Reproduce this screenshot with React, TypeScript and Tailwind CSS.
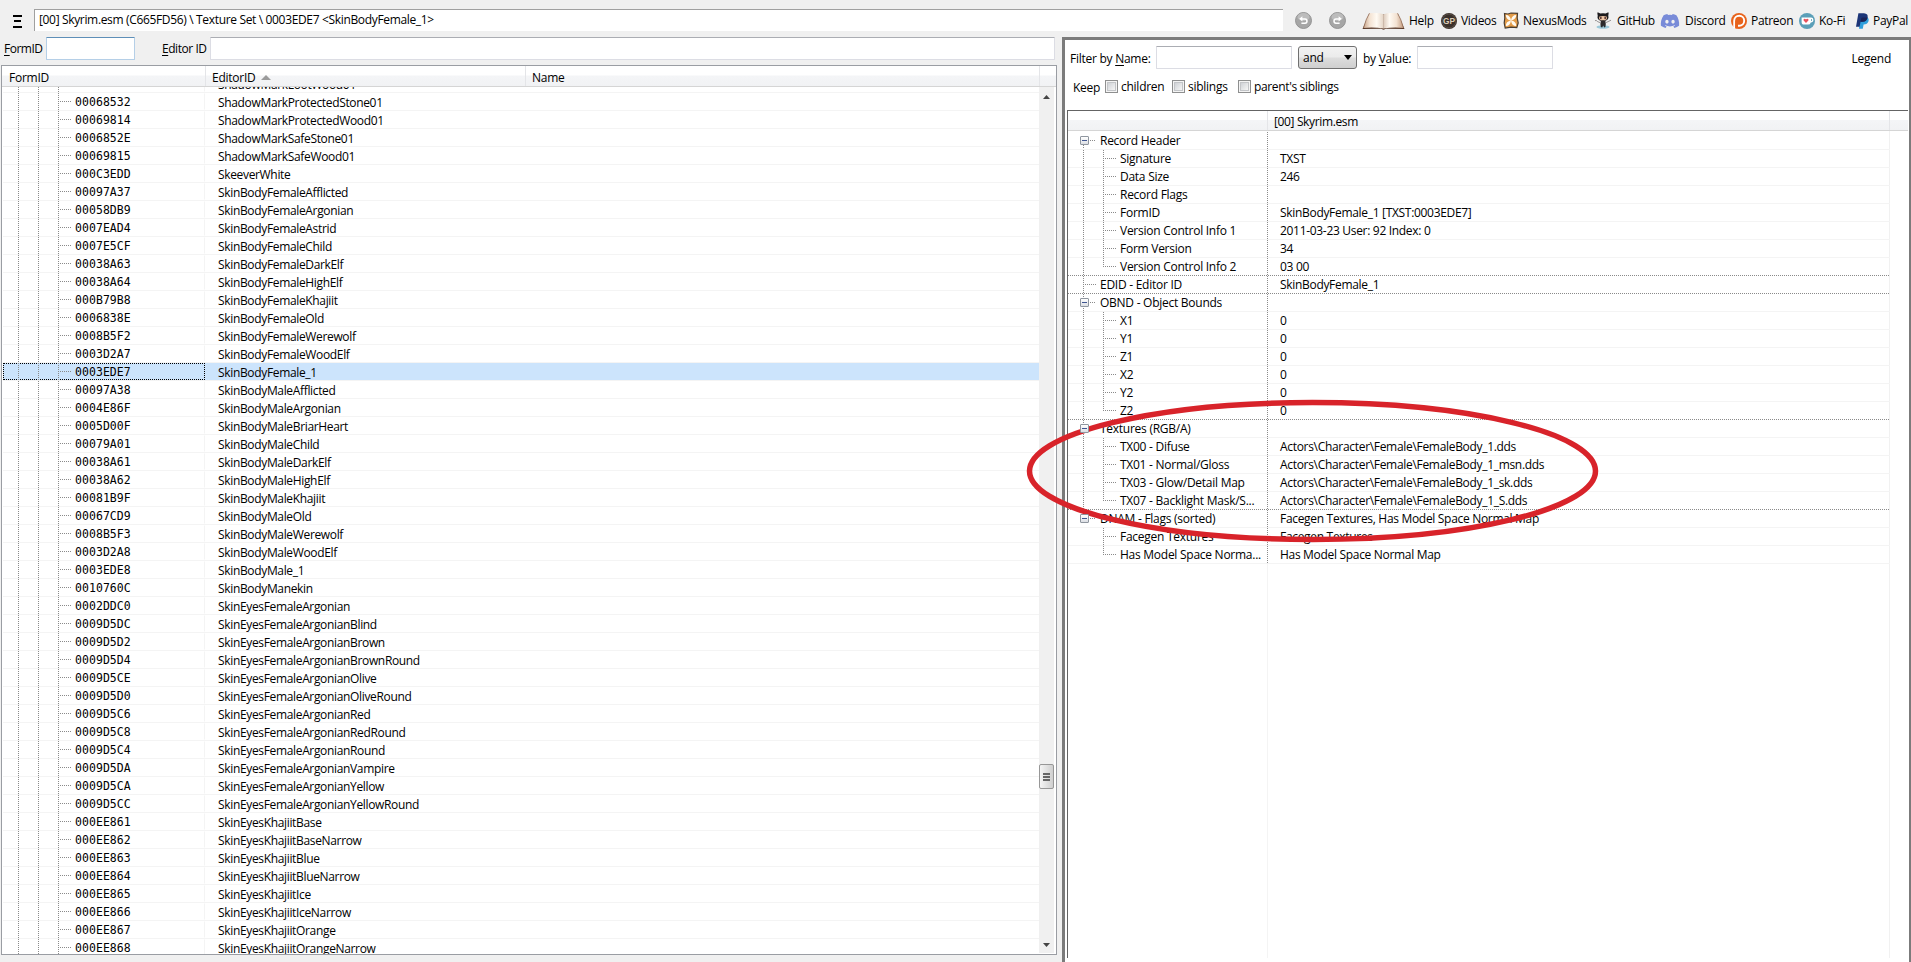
import { useState, type ReactNode } from 'react';
import clsx from 'clsx';
import { FaDiscord } from 'react-icons/fa';

const DOTS_V = 'bg-[repeating-linear-gradient(to_bottom,#8a8a8a_0_1px,transparent_1px_2px)]';
const DOTS_H = 'bg-[repeating-linear-gradient(to_right,#8a8a8a_0_1px,transparent_1px_2px)]';
const HEADER_BG = 'bg-[linear-gradient(to_bottom,#ffffff_0%,#ffffff_45%,#f4f5f7_50%,#f1f2f4_100%)]';
const INPUT_BASE = 'h-[23px] shrink-0 bg-white border rounded-[1px] px-1 outline-none';
const INPUT_GREY = 'border-[#dcdde4] border-t-[#abadb3]';
const INPUT_BLUE = 'border-[#b5cfe7] border-t-[#5e8fb8]';

type TreeEntry = { id: string; name: string };

const ENTRIES: TreeEntry[] = [
  ['', 'ShadowMarkLootWood01'],
  ['00068532', 'ShadowMarkProtectedStone01'],
  ['00069814', 'ShadowMarkProtectedWood01'],
  ['0006852E', 'ShadowMarkSafeStone01'],
  ['00069815', 'ShadowMarkSafeWood01'],
  ['000C3EDD', 'SkeeverWhite'],
  ['00097A37', 'SkinBodyFemaleAfflicted'],
  ['00058DB9', 'SkinBodyFemaleArgonian'],
  ['0007EAD4', 'SkinBodyFemaleAstrid'],
  ['0007E5CF', 'SkinBodyFemaleChild'],
  ['00038A63', 'SkinBodyFemaleDarkElf'],
  ['00038A64', 'SkinBodyFemaleHighElf'],
  ['000B79B8', 'SkinBodyFemaleKhajiit'],
  ['0006838E', 'SkinBodyFemaleOld'],
  ['0008B5F2', 'SkinBodyFemaleWerewolf'],
  ['0003D2A7', 'SkinBodyFemaleWoodElf'],
  ['0003EDE7', 'SkinBodyFemale_1'],
  ['00097A38', 'SkinBodyMaleAfflicted'],
  ['0004E86F', 'SkinBodyMaleArgonian'],
  ['0005D00F', 'SkinBodyMaleBriarHeart'],
  ['00079A01', 'SkinBodyMaleChild'],
  ['00038A61', 'SkinBodyMaleDarkElf'],
  ['00038A62', 'SkinBodyMaleHighElf'],
  ['00081B9F', 'SkinBodyMaleKhajiit'],
  ['00067CD9', 'SkinBodyMaleOld'],
  ['0008B5F3', 'SkinBodyMaleWerewolf'],
  ['0003D2A8', 'SkinBodyMaleWoodElf'],
  ['0003EDE8', 'SkinBodyMale_1'],
  ['0010760C', 'SkinBodyManekin'],
  ['0002DDC0', 'SkinEyesFemaleArgonian'],
  ['0009D5DC', 'SkinEyesFemaleArgonianBlind'],
  ['0009D5D2', 'SkinEyesFemaleArgonianBrown'],
  ['0009D5D4', 'SkinEyesFemaleArgonianBrownRound'],
  ['0009D5CE', 'SkinEyesFemaleArgonianOlive'],
  ['0009D5D0', 'SkinEyesFemaleArgonianOliveRound'],
  ['0009D5C6', 'SkinEyesFemaleArgonianRed'],
  ['0009D5C8', 'SkinEyesFemaleArgonianRedRound'],
  ['0009D5C4', 'SkinEyesFemaleArgonianRound'],
  ['0009D5DA', 'SkinEyesFemaleArgonianVampire'],
  ['0009D5CA', 'SkinEyesFemaleArgonianYellow'],
  ['0009D5CC', 'SkinEyesFemaleArgonianYellowRound'],
  ['000EE861', 'SkinEyesKhajiitBase'],
  ['000EE862', 'SkinEyesKhajiitBaseNarrow'],
  ['000EE863', 'SkinEyesKhajiitBlue'],
  ['000EE864', 'SkinEyesKhajiitBlueNarrow'],
  ['000EE865', 'SkinEyesKhajiitIce'],
  ['000EE866', 'SkinEyesKhajiitIceNarrow'],
  ['000EE867', 'SkinEyesKhajiitOrange'],
  ['000EE868', 'SkinEyesKhajiitOrangeNarrow'],
].map(([id, name]) => ({ id, name }));

type RecordRow = {
  label: string
  value?: string
  child?: boolean
  expandable?: boolean
  // last row of its group: the branch line stops here
  last?: boolean
  // strong separator under the row
  strong?: boolean
}

const RECORD: RecordRow[] = [
  { label: 'Record Header', expandable: true },
  { label: 'Signature', value: 'TXST', child: true },
  { label: 'Data Size', value: '246', child: true },
  { label: 'Record Flags', child: true },
  { label: 'FormID', value: 'SkinBodyFemale_1 [TXST:0003EDE7]', child: true },
  { label: 'Version Control Info 1', value: '2011-03-23 User: 92 Index: 0', child: true },
  { label: 'Form Version', value: '34', child: true },
  { label: 'Version Control Info 2', value: '03 00', child: true, last: true, strong: true },
  { label: 'EDID - Editor ID', value: 'SkinBodyFemale_1', strong: true },
  { label: 'OBND - Object Bounds', expandable: true },
  { label: 'X1', value: '0', child: true },
  { label: 'Y1', value: '0', child: true },
  { label: 'Z1', value: '0', child: true },
  { label: 'X2', value: '0', child: true },
  { label: 'Y2', value: '0', child: true },
  { label: 'Z2', value: '0', child: true, last: true, strong: true },
  { label: 'Textures (RGB/A)', expandable: true },
  { label: 'TX00 - Difuse', value: 'Actors\\Character\\Female\\FemaleBody_1.dds', child: true },
  { label: 'TX01 - Normal/Gloss', value: 'Actors\\Character\\Female\\FemaleBody_1_msn.dds', child: true },
  { label: 'TX03 - Glow/Detail Map', value: 'Actors\\Character\\Female\\FemaleBody_1_sk.dds', child: true },
  { label: 'TX07 - Backlight Mask/S...', value: 'Actors\\Character\\Female\\FemaleBody_1_S.dds', child: true, last: true, strong: true },
  { label: 'DNAM - Flags (sorted)', value: 'Facegen Textures, Has Model Space Normal Map', expandable: true },
  { label: 'Facegen Textures', value: 'Facegen Textures', child: true },
  { label: 'Has Model Space Norma...', value: 'Has Model Space Normal Map', child: true, last: true },
];
const LAST_ROOT = 21;

function BookIcon() {
  return (
    <svg width="43" height="18" viewBox="0 0 43 18">
      <defs>
        <linearGradient id="pageL" x1="0" x2="1"><stop offset="0" stopColor="#c9a58b" /><stop offset=".3" stopColor="#f3e2d2" /><stop offset=".65" stopColor="#fffaf3" /><stop offset="1" stopColor="#e3d3c4" /></linearGradient>
        <linearGradient id="pageR" x1="0" x2="1"><stop offset="0" stopColor="#dccabb" /><stop offset=".3" stopColor="#fffaf3" /><stop offset=".65" stopColor="#f3e2d2" /><stop offset="1" stopColor="#c39a7d" /></linearGradient>
      </defs>
      <path d="M0.5 17 L7 2 L36 2 L42.5 17 L24 16.8 L21.5 17.8 L19 16.8Z" fill="#5a3b2b" />
      <path d="M1.6 15.9 Q3.8 7 7.5 1.2 Q17 .4 21.7 2.2 L21.7 16.6 Q12 14.8 1.6 15.9Z" fill="url(#pageL)" />
      <path d="M41.4 15.9 Q39.2 7 35.5 1.2 Q26 .4 21.5 2.2 L21.5 16.6 Q31 14.8 41.4 15.9Z" fill="url(#pageR)" />
      <path d="M1.6 15.8 Q3.8 7 7.5 1.2M41.4 15.8 Q39.2 7 35.5 1.2" fill="none" stroke="#96705a" strokeWidth=".8" />
    </svg>
  );
}

function GpIcon() {
  return (
    <svg width="16" height="16" viewBox="0 0 16 16">
      <circle cx="8" cy="8" r="8" fill="#3a302a" />
      <circle cx="8" cy="8" r="6.9" fill="none" stroke="#665a50" strokeWidth=".7" />
      <text x="2" y="11.4" fontSize="9.5" fontWeight="700" fontFamily="Liberation Sans, sans-serif" fill="#d9cdb8" textLength="12" lengthAdjust="spacingAndGlyphs" letterSpacing="0">GP</text>
    </svg>
  );
}

function NexusIcon() {
  return (
    <svg width="16" height="17" viewBox="0 0 16 17">
      <path d="M1.5 1.5 L5 2 L8 1 L14.5 1.3 L14.2 6 L15.2 11 L13.8 15.6 L8 15.2 L2.2 16 L1.2 11 L1.8 6Z" fill="#e39c49" stroke="#4a3d30" strokeWidth="1.2" />
      <path d="M2.8 3 Q7.2 3 8 8.5 Q3 7.8 2.8 3ZM13.2 3 Q13.2 7.4 8 8.5 Q8.8 3 13.2 3ZM2.8 14 Q2.8 9.4 8 8.5 Q7.2 14 2.8 14ZM13.2 14 Q8.8 14 8 8.5 Q13.2 9.2 13.2 14Z" fill="#fffaf0" />
    </svg>
  );
}

function OctocatIcon() {
  return (
    <svg width="18" height="17" viewBox="0 0 18 17">
      <ellipse cx="9" cy="15" rx="6.5" ry="1.7" fill="#9cc9da" />
      <path d="M1 8.6 Q2.4 8 3.6 9.6 L6 10.6 M17 8.2 L12 10.6" fill="none" stroke="#6d6868" strokeWidth=".7" />
      <path d="M6.8 9 L11.4 9 Q12.2 12 11.4 15 L10.2 15.6 L9.2 13.6 L8.2 15.6 L6.8 15 Q6 12 6.8 9Z" fill="#2c2a2c" />
      <path d="M3.6 .3 L6.4 1.4 Q9 .9 11.6 1.4 L14.4 .3 Q14.9 2 14.3 3.2 Q15.6 9 9 9 Q2.4 9 3.7 3.2 Q3.1 2 3.6 .3Z" fill="#1d1b1d" />
      <path d="M5.4 4.4 Q9 3.8 12.6 4.4 Q14.2 8.3 9 8.3 Q3.8 8.3 5.4 4.4Z" fill="#eec6a4" />
      <ellipse cx="6.8" cy="6" rx=".9" ry="1.2" fill="#5b3a35" />
      <ellipse cx="11.2" cy="6" rx=".9" ry="1.2" fill="#5b3a35" />
    </svg>
  );
}

function PatreonIcon() {
  return (
    <svg width="16" height="16" viewBox="0 0 16 16">
      <circle cx="8" cy="8" r="8" fill="#e8631c" />
      <path d="M3.2 15.2 V7.8 A5 5 0 1 1 8.2 12.8 H7" fill="none" stroke="#fff" strokeWidth="1.9" />
      <circle cx="8.2" cy="7.8" r="2.8" fill="#e8631c" />
      <path d="M5.4 7.8 V15.4" stroke="#e8631c" strokeWidth="2.2" />
    </svg>
  );
}

function KofiIcon() {
  return (
    <svg width="16" height="16" viewBox="0 0 16 16">
      <circle cx="8" cy="8" r="8" fill="#5b9fb8" />
      <path d="M2.6 4.6 H12 Q14.4 4.6 14.4 7 Q14.4 9.4 11.8 9.4 Q11.2 11.6 9 11.6 H5 Q2.6 11.6 2.6 9Z" fill="#fff" />
      <path d="M12 6 Q13.1 6 13.1 7 Q13.1 8.1 12 8.1Z" fill="#5b9fb8" />
      <path d="M7 10 L4.6 7.6 Q4.1 6 5.6 5.8 Q6.6 5.8 7 6.6 Q7.4 5.8 8.4 5.8 Q9.9 6 9.4 7.6Z" fill="#e8525c" />
    </svg>
  );
}

function PaypalIcon() {
  return (
    <svg width="13" height="16" viewBox="0 0 13 16">
      <path d="M4 4 H11 Q13.4 5.4 12.4 8.4 Q11.4 11.4 7.6 11.4 L6.8 15.8 H3Z" fill="#2f9fdc" />
      <path d="M2.4 .3 H8 Q12.4 .6 11.6 4.6 Q10.8 8.8 6.4 8.8 H4.6 L3.6 13.8 H0Z" fill="#1c3577" />
      <path d="M4.6 8.8 L5.2 5.8 Q5.4 4.6 6.6 4.6 H11.6 Q10.8 8.8 6.4 8.8Z" fill="#1a2356" />
    </svg>
  );
}

function NavIcon({ flip = false }: { flip?: boolean }) {
  return (
    <svg width="17" height="17" viewBox="0 0 17 17" className={flip ? '-scale-x-100' : ''}>
      <circle cx="8.5" cy="8.5" r="8" fill="#a6a6a6" stroke="#8f8f8f" strokeWidth=".9" />
      <ellipse cx="8.5" cy="5" rx="6" ry="4" fill="#bcbcbc" />
      <path d="M6.6 6.9 H10 Q12 7 12 9 Q12 11.2 10 11.2 H6.4" fill="none" stroke="#fff" strokeWidth="1.5" />
      <path d="M7.4 4.2 V9.5 L4.2 6.8Z" fill="#fff" />
    </svg>
  );
}

type LinkItem = { label: string; icon: ReactNode; cls: string; iconCls: string };

const LINKS: LinkItem[] = [
  { label: 'Help', icon: <BookIcon />, cls: 'w-[79px]', iconCls: 'w-[47px]' },
  { label: 'Videos', icon: <GpIcon />, cls: 'w-[62px]', iconCls: 'w-5' },
  { label: 'NexusMods', icon: <NexusIcon />, cls: 'w-[91px]', iconCls: 'w-5' },
  { label: 'GitHub', icon: <OctocatIcon />, cls: 'w-[66px]', iconCls: 'w-[23px]' },
  { label: 'Discord', icon: <FaDiscord size={20} color="#788bd8" />, cls: 'w-[71px]', iconCls: 'w-[25px]' },
  { label: 'Patreon', icon: <PatreonIcon />, cls: 'w-[68px]', iconCls: 'w-5' },
  { label: 'Ko-Fi', icon: <KofiIcon />, cls: 'w-[57px]', iconCls: 'w-5' },
  { label: 'PayPal', icon: <PaypalIcon />, cls: 'w-[55px]', iconCls: 'w-[17px]' },
];

function Toolbar() {
  return (
    <div className="flex h-[37px] shrink-0">
      <div className="w-[34px] shrink-0 pl-[13px] pt-[15px] flex flex-col">
        <span className="w-[9px] h-[2px] bg-black" />
        <span className="w-[7px] h-[2px] ml-px mt-[3px] bg-black" />
        <span className="w-[9px] h-[2px] mt-1 bg-black" />
      </div>
      <div className="mt-[9px] w-[1249px] h-[22px] shrink-0 bg-white border-t border-l border-[#a0a0a0] pl-1 leading-5 tracking-[-0.34px]">
        [00] Skyrim.esm (C665FD56) \ Texture Set \ 0003EDE7 &lt;SkinBodyFemale_1&gt;
      </div>
      <div className="flex items-center gap-[17px] w-[79px] shrink-0 pl-3 h-10"><NavIcon /><NavIcon flip /></div>
      {LINKS.map(l => (
        <a key={l.label} className={clsx('flex items-center h-[41px] shrink-0 tracking-[-0.3px]', l.cls)}>
          <span className={clsx('shrink-0', l.iconCls)}>{l.icon}</span>
          <span>{l.label}</span>
        </a>
      ))}
    </div>
  );
}

function RecordTree() {
  const [selected, setSelected] = useState('0003EDE7');
  return (
    <div className="ml-px mt-[5px] w-[1056px] h-[890px] bg-white border border-[#9a9da3] flex flex-col overflow-hidden">
      <div className={clsx('flex h-[21px] shrink-0 border-b border-[#d5d5d5] leading-[24px]', HEADER_BG)}>
        <div className="w-[204px] pl-[7px] border-r border-[#e4e5e8]">FormID</div>
        <div className="w-[320px] pl-[6px] border-r border-[#e4e5e8] flex">
          EditorID
          <svg width="10" height="5" viewBox="0 0 10 5" className="ml-[5px] mt-[9px]"><path d="M0 5 L5 0 L10 5Z" fill="#9b9b9b" /></svg>
        </div>
        <div className="w-[514px] pl-[6px] border-r border-[#e4e5e8]">Name</div>
      </div>
      <div className="flex flex-1 min-h-0">
        <div className="w-[1037px] pl-px overflow-hidden">
          <div className="-mt-3">
            {ENTRIES.map(e => {
              const on = e.id === selected;
              return (
                <div key={e.name} onClick={() => setSelected(e.id)}
                  className={clsx('flex h-[18px] border-b border-[#f4f4f4] leading-[18px]', on && 'bg-[#cce4fc]')}>
                  <div className={clsx('flex w-[202px] h-[17px] shrink-0 border', on ? 'border-dotted border-black' : 'border-transparent border-r-[#f4f4f4]')}>
                    <span className={clsx('w-px h-[18px] -mt-px ml-[14px]', DOTS_V)} />
                    <span className={clsx('w-px h-[18px] -mt-px ml-[19px]', DOTS_V)} />
                    <span className={clsx('w-px h-[18px] -mt-px ml-[19px]', DOTS_V)} />
                    <span className={clsx('w-[11px] h-px mt-[7px] ml-px', DOTS_H)} />
                    <span className="ml-1 font-['DejaVu_Sans_Mono',monospace] text-[11.5px] leading-[17px] tracking-[0.05px]">{e.id}</span>
                  </div>
                  <span className="pl-[13px] pt-px tracking-[-0.34px]">{e.name}</span>
                </div>
              );
            })}
          </div>
        </div>
        <div className="w-[15px] mb-px bg-[#f0f0f0] flex flex-col items-center">
          <svg width="7" height="4" viewBox="0 0 7 4" className="mt-2"><path d="M0 4 L3.5 0 L7 4Z" fill="#444" /></svg>
          <div className="mt-[665px] w-[15px] h-[25px] rounded-[2px] border border-[#979797] bg-linear-to-r from-[#f5f5f5] to-[#cfcfcf] flex flex-col items-center justify-center gap-px">
            <span className="w-[7px] h-[2px] bg-[#666]" />
            <span className="w-[7px] h-[2px] bg-[#666]" />
            <span className="w-[7px] h-[2px] bg-[#666]" />
          </div>
          <svg width="7" height="4" viewBox="0 0 7 4" className="mt-auto mb-[6px]"><path d="M0 0 L3.5 4 L7 0Z" fill="#444" /></svg>
        </div>
      </div>
    </div>
  );
}

function Check({ label, cls }: { label: string; cls: string }) {
  return (
    <label className={clsx('flex items-center', cls)}>
      <span className="w-[13px] h-[13px] mr-[3px] border border-[#8e8f8f] bg-[#f4f4f4] p-px">
        <span className="block w-full h-full border border-[#c3c5c8] bg-linear-to-br from-[#cfd2d6] to-[#f6f6f6]" />
      </span>
      {label}
    </label>
  );
}

function RecordLine({ row, index }: { row: RecordRow; index: number }) {
  return (
    <div className="flex flex-col h-[18px] w-[822px]">
      <div className="flex h-[17px] leading-[18px]">
        {/* root branch */}
        <div className="w-[15px] shrink-0" />
        <div className={clsx('w-px shrink-0',
          index === 0 ? 'h-[9px] mt-[9px]' : index === LAST_ROOT ? 'h-2' : 'h-[18px]',
          index <= LAST_ROOT && DOTS_V)} />
        {!row.child && (
          <div className="flex w-[16px] shrink-0">
            {row.expandable && (
              <span className="z-[1] -ml-[4px] mt-[4px] w-[9px] h-[9px] shrink-0 border border-[#8f969f] rounded-[1px] bg-linear-to-b from-white to-[#dcdfe4] flex items-center justify-center">
                <span className="w-[5px] h-px bg-[#3f5590]" />
              </span>
            )}
            <span className={clsx('h-px mt-2', row.expandable ? 'ml-px w-[5px]' : 'ml-px w-[11px]', DOTS_H)} />
          </div>
        )}
        {row.child && (
          <div className="flex w-[36px] shrink-0 pl-[19px]">
            <span className={clsx('w-px', row.last ? 'h-[9px]' : 'h-[18px]', DOTS_V)} />
            <span className={clsx('h-px w-[11px] mt-2 ml-px', DOTS_H)} />
          </div>
        )}
        <div className={clsx('shrink-0 whitespace-nowrap', row.child ? 'w-[147px]' : 'w-[167px]')}>{row.label}</div>
        <div className={clsx('w-px h-[18px] shrink-0', DOTS_V)} />
        <div className="pl-3 whitespace-nowrap tracking-[-0.31px]">{row.value}</div>
      </div>
      <div className={clsx('h-px', row.strong ? DOTS_H : 'bg-[#f4f4f4]')} />
    </div>
  );
}

function RecordView() {
  return (
    <div className="w-[849px] h-[925px] bg-white border-l-[3px] border-t-[3px] border-r-2 border-[#7b7b7b] tracking-[-0.26px]">
      <div className="flex h-[29px] items-start pt-[6px] leading-[25px]">
        <span className="w-[91px] shrink-0 pl-[5px]">Filter by <u className="underline-offset-2">N</u>ame:</span>
        <input className={clsx(INPUT_BASE, INPUT_GREY, 'w-[136px]')} />
        <button className="ml-[6px] w-[59px] h-[23px] shrink-0 rounded-[3px] border border-[#707070] bg-[linear-gradient(to_bottom,#f2f2f2_0%,#ebebeb_48%,#dddddd_52%,#cfcfcf_100%)] flex items-center justify-between pl-1 pr-1">
          and
          <svg width="8" height="5" viewBox="0 0 8 5"><path d="M0 0 H8 L4 5Z" fill="#000" /></svg>
        </button>
        <span className="w-[60px] shrink-0 pl-[6px]">by <u className="underline-offset-2">V</u>alue:</span>
        <input className={clsx(INPUT_BASE, INPUT_GREY, 'w-[136px]')} />
        <span className="ml-auto pr-[18px]">Legend</span>
      </div>
      <div className="flex h-[17px] mt-[9px] pl-[8px] items-center">
        <span className="w-8 pt-[3px]">Keep</span>
        <Check label="children" cls="w-[67px]" />
        <Check label="siblings" cls="w-[66px]" />
        <Check label="parent's siblings" cls="tracking-[-0.35px]" />
      </div>
      <div className="ml-[2px] mt-[15px] w-[841px] h-[848px] border-t border-l border-[#646464]">
        <div className={clsx('flex h-5 border-b border-[#d5d5d5] leading-[22px]', HEADER_BG)}>
          <div className="w-[200px] border-r border-[#e4e5e8]" />
          <div className="w-[622px] border-r border-[#e4e5e8] pl-[6px] tracking-[-0.36px]">[00] Skyrim.esm</div>
        </div>
        <div className="flex h-[827px]">
          <div className="w-[822px] flex flex-col pt-px border-r border-[#f1f1f1]">
            {RECORD.map((row, i) => <RecordLine key={i} row={row} index={i} />)}
            <div className="flex-1 w-[200px] border-r border-[#f4f4f4]" />
          </div>
        </div>
      </div>
    </div>
  );
}

export default function App() {
  return (
    <div className="relative w-[1911px] h-[962px] overflow-hidden bg-[#f0f0f0] text-black font-['Open_Sans',sans-serif] text-[12px] tracking-[-0.25px] whitespace-nowrap flex flex-col">
      <Toolbar />
      <div className="flex h-[925px]">
        <div className="w-[1062px] shrink-0">
          <div className="flex h-[23px] leading-[24px]">
            <label className="w-[46px] pl-1 shrink-0 tracking-[-0.5px]"><u className="underline-offset-2">F</u>ormID</label>
            <input className={clsx(INPUT_BASE, INPUT_BLUE, 'w-[89px]')} />
            <label className="w-[75px] pl-[27px] shrink-0 tracking-[-0.45px]"><u className="underline-offset-2">E</u>ditor ID</label>
            <input className={clsx(INPUT_BASE, INPUT_GREY, 'w-[845px]')} />
          </div>
          <RecordTree />
        </div>
        <RecordView />
      </div>

      {/* red marker round the texture paths */}
      <svg className="absolute left-[1020px] top-[395px] pointer-events-none" width="590" height="155" viewBox="0 0 590 155">
        <ellipse cx="292.5" cy="76" rx="283" ry="68.5" fill="none" stroke="#d8232a" strokeWidth="5.5" />
      </svg>
    </div>
  );
}
